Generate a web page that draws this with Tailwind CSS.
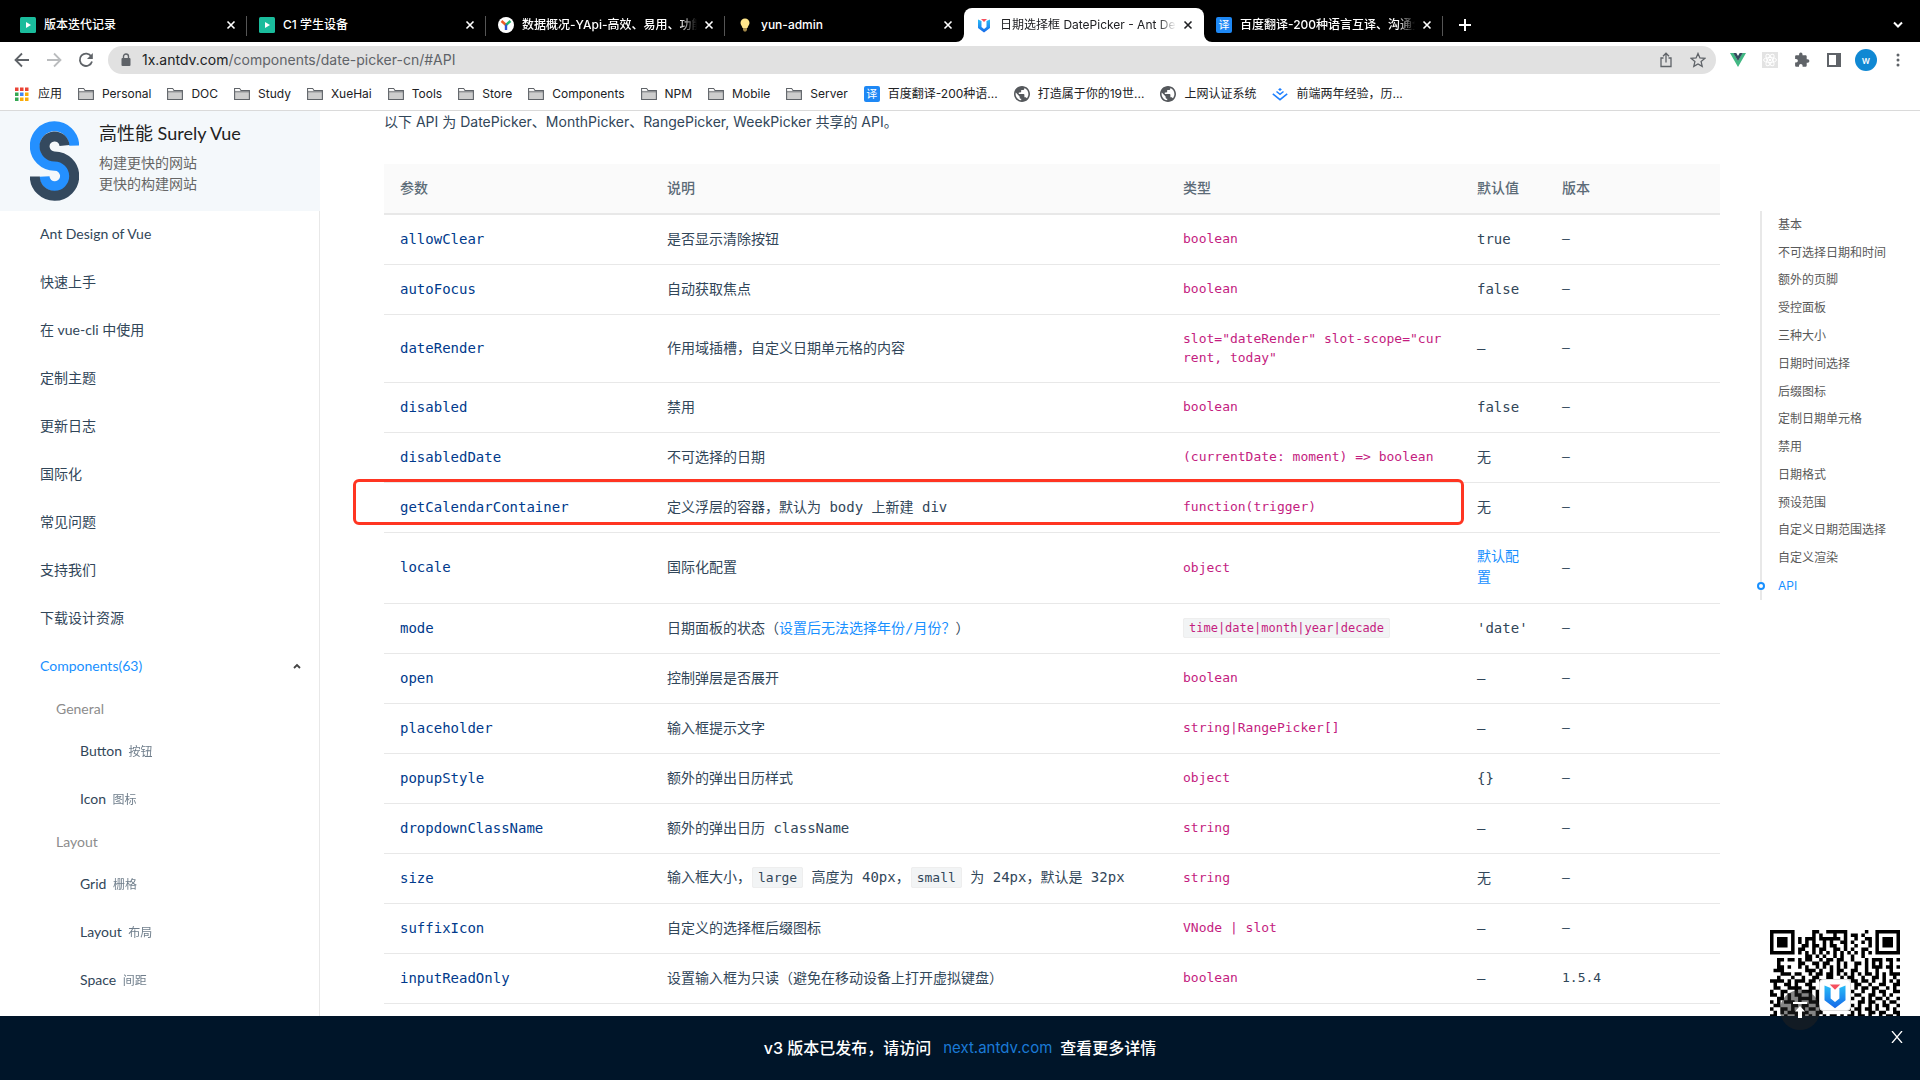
<!DOCTYPE html>
<html lang="zh-CN">

<head>
    <meta charset="UTF-8">
    <meta name="viewport" content="width=device-width, initial-scale=1.0">
    <title>日期选择框 DatePicker - Ant Design of Vue</title>
    <script src="https://cdn.jsdelivr.net/npm/@tailwindcss/browser@4"></script>
</head>

<body class="h-screen overflow-hidden flex flex-col bg-white text-sm text-[#314659] font-[Inter,'Noto_Sans_CJK_SC',sans-serif]">

    <!-- Shared icons -->
    <svg class="absolute size-0" aria-hidden="true">
        <linearGradient id="ug" x1="0" y1="0" x2="0" y2="1"><stop offset="0" stop-color="#29bdf8" /><stop offset="1" stop-color="#1668e8" /></linearGradient>
        <symbol id="i-close" viewBox="0 0 16 16"><path d="M4.500 4.500l7 7M11.500 4.500l-7 7" stroke="currentColor" stroke-width="1.600" fill="none" /></symbol>
        <symbol id="i-play" viewBox="0 0 16 16"><rect width="16" height="16" rx="1.500" fill="#1abc9c" /><path d="M6 5l5 3-5 3z" fill="#fff" /></symbol>
        <symbol id="i-folder" viewBox="0 0 16 16"><path d="M.6 13.500v-11h5l1.400 2h8.400v9z" fill="#cdcdcd" stroke="#5f6368" stroke-width="1.100" /><path d="M1 5.800h14" stroke="#5f6368" stroke-width=".8" /><path d="M1.200 3.100h4.100l1.100 1.600H1.200z" fill="#fff" /></symbol>
        <symbol id="i-globe" viewBox="2 2 20 20"><path d="M12 2C6.480 2 2 6.480 2 12s4.480 10 10 10 10-4.480 10-10S17.520 2 12 2zm-1 17.930c-3.950-.49-7-3.850-7-7.930 0-.62.08-1.210.21-1.790L9 15v1c0 1.100.9 2 2 2v1.930zm6.900-2.540c-.26-.81-1-1.390-1.900-1.390h-1v-3c0-.55-.45-1-1-1H8v-2h2c.55 0 1-.45 1-1V7h2c1.100 0 2-.9 2-2v-.41c2.930 1.190 5 4.060 5 7.410 0 2.080-.8 3.970-2.100 5.390z" fill="#55585c" /></symbol>
        <symbol id="i-antv" viewBox="0 0 32 32"><path d="M4 5l7 3v12l5 4 5-4V8l7-3v17L16 31 4 22z" fill="url(#ug)" /><path d="M10 4h12l-6 6z" fill="#f5515f" /></symbol>
    </svg>

    <!-- Tab strip -->
    <header class="shrink-0">
        <div class="h-[42px] bg-black text-white text-xs flex items-end pl-2">
            <div class="w-[239px] h-[34px] px-3 pr-2 flex items-center gap-2 relative">
                <svg class="size-4 shrink-0"><use href="#i-play" /></svg>
                <span class="flex-1 whitespace-nowrap overflow-hidden font-medium">版本迭代记录</span>
                <button class="-ml-1" aria-label="关闭"><svg class="size-4"><use href="#i-close" /></svg></button>
                <span class="absolute right-0 top-2 w-px h-5 bg-[#555]"></span>
            </div>
            <div class="w-[239px] h-[34px] px-3 pr-2 flex items-center gap-2 relative">
                <svg class="size-4 shrink-0"><use href="#i-play" /></svg>
                <span class="flex-1 whitespace-nowrap overflow-hidden font-medium">C1 学生设备</span>
                <button class="-ml-1" aria-label="关闭"><svg class="size-4"><use href="#i-close" /></svg></button>
                <span class="absolute right-0 top-2 w-px h-5 bg-[#555]"></span>
            </div>
            <div class="w-[239px] h-[34px] px-3 pr-2 flex items-center gap-2 relative">
                <svg class="size-4 shrink-0" viewBox="0 0 16 16"><circle cx="8" cy="8" r="8" fill="#fff" /><g fill="none" stroke-width="2.400"><path d="M3.500 4L8 8" stroke="#f15a24" /><path d="M12.500 4L8 8" stroke="#22b573" /><path d="M8 7.500v5.500" stroke="#2f55d4" /></g></svg>
                <span class="flex-1 whitespace-nowrap overflow-hidden font-medium mask-r-from-90%">数据概况-YApi-高效、易用、功能</span>
                <button class="-ml-1" aria-label="关闭"><svg class="size-4"><use href="#i-close" /></svg></button>
                <span class="absolute right-0 top-2 w-px h-5 bg-[#555]"></span>
            </div>
            <div class="w-[239px] h-[34px] px-3 pr-2 flex items-center gap-2">
                <svg class="size-4 shrink-0" viewBox="0 0 16 16"><path d="M8 1.500a4.500 4.500 0 0 1 4.500 4.500c0 2-1.700 3-2 5h-5c-.3-2-2-3-2-5A4.500 4.500 0 0 1 8 1.500z" fill="#ffe58a" /><path d="M6 11h4v2l-1 1.500H7L6 13z" fill="#a58a4a" /></svg>
                <span class="flex-1 whitespace-nowrap overflow-hidden font-medium">yun-admin</span>
                <button class="-ml-1" aria-label="关闭"><svg class="size-4"><use href="#i-close" /></svg></button>
            </div>
            <div class="w-[240px] h-[34px] px-3 pr-2 flex items-center gap-2 relative bg-white text-[#202124] rounded-t-lg">
                <svg class="absolute -left-2 bottom-0 size-2" viewBox="0 0 8 8"><path d="M8 0v8H0a8 8 0 0 0 8-8z" fill="#fff" /></svg>
                <svg class="absolute -right-2 bottom-0 size-2" viewBox="0 0 8 8"><path d="M0 0v8h8a8 8 0 0 1-8-8z" fill="#fff" /></svg>
                <svg class="size-4 shrink-0"><use href="#i-antv" /></svg>
                <span class="flex-1 whitespace-nowrap overflow-hidden mask-r-from-90%">日期选择框 DatePicker - Ant Des</span>
                <button class="-ml-1" aria-label="关闭"><svg class="size-4"><use href="#i-close" /></svg></button>
            </div>
            <div class="w-[239px] h-[34px] px-3 pr-2 flex items-center gap-2 relative">
                <span class="size-4 shrink-0 rounded-xs bg-[#1e88f5] text-[11px] leading-4 text-center">译</span>
                <span class="flex-1 whitespace-nowrap overflow-hidden font-medium mask-r-from-90%">百度翻译-200种语言互译、沟通全</span>
                <button class="-ml-1" aria-label="关闭"><svg class="size-4"><use href="#i-close" /></svg></button>
                <span class="absolute right-0 top-2 w-px h-5 bg-[#555]"></span>
            </div>
            <button class="h-[34px] px-3 ml-1 flex items-center" aria-label="新标签页"><svg class="size-3" viewBox="0 0 12 12"><path d="M6 0v12M0 6h12" stroke="#fff" stroke-width="2" /></svg></button>
            <button class="h-[34px] ml-auto mr-4 flex items-center" aria-label="搜索标签页"><svg class="w-3 h-2" viewBox="0 0 12 8"><path d="M2 1.500l4 4 4-4" fill="none" stroke="#fff" stroke-width="2" /></svg></button>
        </div>

        <!-- Toolbar -->
        <div class="h-9 flex items-center pl-3.5 pr-3.5 text-[#5f6368]">
            <div class="flex items-center gap-4">
                <button aria-label="后退"><svg class="size-4" viewBox="0 0 16 16"><path d="M15 8H2M8 1.500L1.500 8 8 14.500" fill="none" stroke="currentColor" stroke-width="1.800" /></svg></button>
                <button aria-label="前进"><svg class="size-4 text-[#babcbe]" viewBox="0 0 16 16"><path d="M1 8h13M8 1.500L14.500 8 8 14.500" fill="none" stroke="currentColor" stroke-width="1.800" /></svg></button>
                <button aria-label="刷新"><svg class="size-4" viewBox="0 0 16 16"><path d="M13.300 4.500A6.200 6.200 0 1 0 14 9.500" fill="none" stroke="currentColor" stroke-width="1.800" /><path d="M14.800 1v6H9z" fill="currentColor" /></svg></button>
            </div>
            <div class="flex-1 h-7 ml-3.5 rounded-full bg-[#e1e1e1] flex items-center pl-3 pr-2.5">
                <svg class="w-3 h-3.5" viewBox="0 0 12 14"><rect x="1.500" y="5" width="9" height="8" rx="1" fill="currentColor" /><path d="M3.500 6V3.500a2.500 2.500 0 0 1 5 0V6" fill="none" stroke="currentColor" stroke-width="1.400" /></svg>
                <a href="#API" class="flex-1 ml-2.5 text-sm"><span class="text-[#202124]">1x.antdv.com</span>/components/date-picker-cn/#API</a>
                <button class="mr-4" aria-label="分享"><svg class="size-4" viewBox="0 0 16 16"><path d="M5.500 6H3v8.500h10V6h-2.500M8 10.500V1.500M5 4.200l3-3 3 3" fill="none" stroke="currentColor" stroke-width="1.300" /></svg></button>
                <button aria-label="收藏"><svg class="size-4" viewBox="0 0 16 16"><path d="M8 1.500l1.900 4.500 4.900.4-3.700 3.200 1.100 4.800L8 11.900l-4.200 2.500 1.100-4.800L1.200 6.400 6.100 6z" fill="none" stroke="currentColor" stroke-width="1.300" /></svg></button>
            </div>
            <div class="flex items-center gap-4 ml-3.5">
                <svg class="size-4" viewBox="0 0 16 16"><path d="M0 1h3.500L8 8.800 12.500 1H16L8 15z" fill="#41b883" /><path d="M3.300 1h3L8 4l1.700-3h3L8 9z" fill="#35495e" /></svg>
                <svg class="size-4" viewBox="0 0 16 16"><rect width="16" height="16" fill="#e3e3e3" /><g fill="none" stroke="#fff"><ellipse cx="8" cy="8" rx="6.500" ry="2.500" /><ellipse cx="8" cy="8" rx="6.500" ry="2.500" transform="rotate(60 8 8)" /><ellipse cx="8" cy="8" rx="6.500" ry="2.500" transform="rotate(120 8 8)" /></g><circle cx="8" cy="8" r="1.300" fill="#fff" /></svg>
                <svg class="size-4" viewBox="0 0 16 16"><path d="M13.700 7.300h-1V4.500c0-.8-.6-1.300-1.300-1.300H8.500v-1a1.700 1.700 0 0 0-3.400 0v1H2.400c-.7 0-1.300.5-1.300 1.300V7h1a1.800 1.800 0 0 1 0 3.600h-1v2.900c0 .7.600 1.300 1.300 1.300H5v-1a1.800 1.800 0 0 1 3.600 0v1h2.800c.7 0 1.300-.6 1.300-1.300v-2.800h1a1.700 1.700 0 0 0 0-3.400z" fill="currentColor" /></svg>
                <svg class="size-4" viewBox="0 0 16 16"><path d="M1 1h14v14H1zM3 3v10h7V3z" fill="currentColor" fill-rule="evenodd" /></svg>
                <span class="size-[22px] -mx-[3px] rounded-full bg-[#1088d3] text-white text-[10px] leading-[22px] text-center font-medium">w</span>
                <button aria-label="菜单"><svg class="size-4" viewBox="0 0 16 16"><g fill="currentColor"><circle cx="8" cy="3" r="1.500" /><circle cx="8" cy="8" r="1.500" /><circle cx="8" cy="13" r="1.500" /></g></svg></button>
            </div>
        </div>

        <!-- Bookmarks -->
        <nav class="h-[33px] flex items-center gap-4 pl-3.5 text-xs text-[#202124] border-b border-[#dadada] [&>a]:flex [&>a]:items-center [&>a]:gap-2 [&>a]:whitespace-nowrap [&_svg]:size-4">
            <a href="#"><svg viewBox="0 0 16 16"><path d="M1 1.500h3.500V5H1zM6 1.500h3.500V5H6zM11 1.500h3.500V5H11z" fill="#ea4335" /><path d="M1 6.500h3.500V10H1zM1 11.500h3.500V15H1z" fill="#34a853" /><path d="M6 6.500h3.500V10H6z" fill="#4285f4" /><path d="M11 6.500h3.500V10H11zM6 11.500h3.500V15H6zM11 11.500h3.500V15H11z" fill="#fbab08" /></svg>应用</a>
            <a href="#"><svg><use href="#i-folder" /></svg>Personal</a>
            <a href="#"><svg><use href="#i-folder" /></svg>DOC</a>
            <a href="#"><svg><use href="#i-folder" /></svg>Study</a>
            <a href="#"><svg><use href="#i-folder" /></svg>XueHai</a>
            <a href="#"><svg><use href="#i-folder" /></svg>Tools</a>
            <a href="#"><svg><use href="#i-folder" /></svg>Store</a>
            <a href="#"><svg><use href="#i-folder" /></svg>Components</a>
            <a href="#"><svg><use href="#i-folder" /></svg>NPM</a>
            <a href="#"><svg><use href="#i-folder" /></svg>Mobile</a>
            <a href="#"><svg><use href="#i-folder" /></svg>Server</a>
            <a href="#"><span class="size-4 rounded-xs bg-[#1e88f5] text-white text-[11px] leading-4 text-center">译</span>百度翻译-200种语...</a>
            <a href="#"><svg><use href="#i-globe" /></svg>打造属于你的19世...</a>
            <a href="#"><svg><use href="#i-globe" /></svg>上网认证系统</a>
            <a href="#"><svg viewBox="0 0 16 16"><g fill="none" stroke="#1e80ff" stroke-width="1.500"><path d="M4.500 5.500L8 8.300l3.500-2.800M.8 7.800L8 13.700l7.200-5.900" /></g><path d="M8 2l1.900 1.500L8 5 6.100 3.500z" fill="#1e80ff" /></svg>前端两年经验，历...</a>
        </nav>
    </header>

    <div class="flex-1 min-h-0 flex overflow-hidden">

        <!-- Sidebar -->
        <aside class="w-80 shrink-0 font-[Lato,'Noto_Sans_CJK_SC',sans-serif]">
            <a href="#" class="h-[100px] bg-[#f4f8fb] flex items-start pl-[30px] pt-2.5">
                <svg class="w-[49px] h-20" viewBox="0 0 49 80" fill="none" stroke-width="10">
                    <path d="M44.200 24.500A19.700 19.700 0 1 0 24.500 44.700A10.300 10.300 0 1 1 14.500 55.500" stroke="#2490ff" />
                    <path d="M34.500 24.500A10 10 0 1 0 24.500 35.400A19.700 19.700 0 1 1 4.800 55.500" stroke="#34495e" />
                </svg>
                <div class="ml-5">
                    <h3 class="text-lg leading-6 text-[#222]">高性能 Surely Vue</h3>
                    <p class="mt-[7px] leading-[21px] text-[#666]">构建更快的网站<br>更快的构建网站</p>
                </div>
            </a>
            <nav class="border-r border-[#e8e8e8] h-full pt-[3px] [&_a]:block [&_a]:h-10 [&_a]:leading-10 [&_a]:mb-2">
                <div class="pl-10">
                    <a href="#">Ant Design of Vue</a>
                    <a href="#">快速上手</a>
                    <a href="#">在 vue-cli 中使用</a>
                    <a href="#">定制主题</a>
                    <a href="#">更新日志</a>
                    <a href="#">国际化</a>
                    <a href="#">常见问题</a>
                    <a href="#">支持我们</a>
                    <a href="#">下载设计资源</a>
                </div>
                <button class="w-full h-10 pl-10 pr-[18px] flex items-center justify-between text-[#1890ff]">Components(63)
                    <svg class="size-2" viewBox="0 0 8 8"><path d="M1 6l3-3 3 3" fill="none" stroke="#444" stroke-width="1.800" /></svg>
                </button>
                <h4 class="pl-14 h-[45px] leading-[45px] text-[#8c8c8c]">General</h4>
                <div class="pl-20 -mb-2">
                    <a href="#">Button <span class="ml-[3px] text-xs opacity-70">按钮</span></a>
                    <a href="#">Icon <span class="ml-[3px] text-xs opacity-70">图标</span></a>
                </div>
                <h4 class="pl-14 h-[45px] leading-[45px] text-[#8c8c8c]">Layout</h4>
                <div class="pl-20">
                    <a href="#">Grid <span class="ml-[3px] text-xs opacity-70">栅格</span></a>
                    <a href="#">Layout <span class="ml-[3px] text-xs opacity-70">布局</span></a>
                    <a href="#">Space <span class="ml-[3px] text-xs opacity-70">间距</span></a>
                </div>
            </nav>
        </aside>

        <!-- API table -->
        <main class="flex-1 min-w-0 pl-16 pr-10">
            <p class="leading-[22px] mb-[31px]">以下 API 为 DatePicker、MonthPicker、RangePicker, WeekPicker 共享的 API。</p>
            <table class="w-full table-fixed border-separate border-spacing-0 text-left font-['DejaVu_Sans_Mono','Noto_Sans_CJK_SC',monospace] [&_td]:px-4 [&_th]:px-4 [&_th]:pb-0.5 [&_td]:pt-0 [&_td]:pb-0.5 [&_td:nth-child(3)]:pb-0 [&_td:nth-child(5)]:pb-0 [&_td]:border-b [&_td]:border-[#e8e8e8] [&_tbody>tr]:h-[50px] [&_td:first-child]:text-[#003a8c] [&_td:nth-child(3)]:text-[13px] [&_td:nth-child(3)]:text-[#c41d7f] [&_td:nth-child(3)]:break-all [&_td:nth-child(5)]:text-[13px] [&_code]:font-[inherit] [&_code]:bg-[#f2f4f5] [&_code]:border [&_code]:border-[#eee] [&_code]:rounded-xs [&_code]:px-[5px] [&_code]:py-0.5">
                <colgroup>
                    <col class="w-[267px]">
                    <col class="w-[516px]">
                    <col class="w-[294px]">
                    <col class="w-[85px]">
                    <col>
                </colgroup>
                <thead>
                    <tr class="h-[51px] bg-[#fafafa] text-[#5c6b77] font-[Inter,'Noto_Sans_CJK_SC',sans-serif] [&>th]:font-medium [&>th]:border-b-2 [&>th]:border-[#e8e8e8]">
                        <th>参数</th>
                        <th>说明</th>
                        <th>类型</th>
                        <th>默认值</th>
                        <th>版本</th>
                    </tr>
                </thead>
                <tbody>
                    <tr><td>allowClear</td><td>是否显示清除按钮</td><td>boolean</td><td>true</td><td>–</td></tr>
                    <tr><td>autoFocus</td><td>自动获取焦点</td><td>boolean</td><td>false</td><td>–</td></tr>
                    <tr class="h-[68px]!"><td>dateRender</td><td>作用域插槽，自定义日期单元格的内容</td><td>slot="dateRender" slot-scope="current, today"</td><td>–</td><td>–</td></tr>
                    <tr><td>disabled</td><td>禁用</td><td>boolean</td><td>false</td><td>–</td></tr>
                    <tr><td>disabledDate</td><td>不可选择的日期</td><td>(currentDate: moment) =&gt; boolean</td><td>无</td><td>–</td></tr>
                    <tr class="relative">
                        <td>getCalendarContainer<span class="absolute -top-1 -left-[31px] right-64 h-[46px] border-3 border-[#ff3522] rounded-md"></span></td>
                        <td>定义浮层的容器，默认为 body 上新建 div</td><td>function(trigger)</td><td>无</td><td>–</td>
                    </tr>
                    <tr class="h-[71px]!"><td>locale</td><td>国际化配置</td><td>object</td><td><a href="#" class="block leading-[21px] text-[#1890ff]">默认配置</a></td><td>–</td></tr>
                    <tr><td>mode</td><td>日期面板的状态（<a href="#" class="text-[#1890ff]">设置后无法选择年份/月份？</a>）</td><td><code class="text-xs">time|date|month|year|decade</code></td><td>'date'</td><td>–</td></tr>
                    <tr><td>open</td><td>控制弹层是否展开</td><td>boolean</td><td>–</td><td>–</td></tr>
                    <tr><td>placeholder</td><td>输入框提示文字</td><td>string|RangePicker[]</td><td>–</td><td>–</td></tr>
                    <tr><td>popupStyle</td><td>额外的弹出日历样式</td><td>object</td><td>{}</td><td>–</td></tr>
                    <tr><td>dropdownClassName</td><td>额外的弹出日历 className</td><td>string</td><td>–</td><td>–</td></tr>
                    <tr><td>size</td><td>输入框大小，<code class="text-[13px] ml-px">large</code> 高度为 40px，<code class="text-[13px] ml-px">small</code> 为 24px，默认是 32px</td><td>string</td><td>无</td><td>–</td></tr>
                    <tr><td>suffixIcon</td><td>自定义的选择框后缀图标</td><td>VNode | slot</td><td>–</td><td>–</td></tr>
                    <tr><td>inputReadOnly</td><td>设置输入框为只读（避免在移动设备上打开虚拟键盘）</td><td>boolean</td><td>–</td><td>1.5.4</td></tr>
                </tbody>
            </table>
        </main>

        <!-- Anchor list -->
        <aside class="w-40 shrink-0 pt-[100px]">
            <nav class="h-[389px] flex flex-col border-l-2 border-[#e8e8e8] pl-4 text-xs text-[#595959] [&>a]:flex-1 [&>a]:flex [&>a]:items-center">
                <a href="#">基本</a>
                <a href="#">不可选择日期和时间</a>
                <a href="#">额外的页脚</a>
                <a href="#">受控面板</a>
                <a href="#">三种大小</a>
                <a href="#">日期时间选择</a>
                <a href="#">后缀图标</a>
                <a href="#">定制日期单元格</a>
                <a href="#">禁用</a>
                <a href="#">日期格式</a>
                <a href="#">预设范围</a>
                <a href="#">自定义日期范围选择</a>
                <a href="#">自定义渲染</a>
                <a href="#API" class="relative text-[#1890ff]"><span class="absolute -left-[21px] size-2 rounded-full border-2 border-[#1890ff] bg-white"></span>API</a>
            </nav>
        </aside>
    </div>

    <!-- QR code -->
    <div class="fixed right-5 bottom-5 size-[130px] bg-white">
        <svg id="qr" class="size-[130px]" viewBox="0 0 37 37"></svg>
        <div class="absolute left-[49px] top-[49px] size-8 rounded-sm bg-white border border-[#ddd] flex items-center justify-center"><svg class="size-7"><use href="#i-antv" /></svg></div>
    </div>

    <!-- Version notice -->
    <footer class="fixed inset-x-0 bottom-0 h-16 bg-[#001529] text-white text-base font-medium flex items-center justify-center">
        <span>v3 版本已发布，请访问</span>
        <a href="#" class="ml-3 mr-2 text-[15px] font-normal text-[#1b7ad6]">next.antdv.com</a>
        <span>查看更多详情</span>
        <button class="absolute right-[17px] top-[15px]" aria-label="关闭"><svg class="size-3" viewBox="0 0 12 12"><path d="M1 0l10 12M11 0L1 12" stroke="#fff" stroke-width="1.300" /></svg></button>
    </footer>

    <!-- Back to top -->
    <button class="fixed right-[100px] bottom-[50px] size-10 rounded-full bg-[#202020]/55 flex items-center justify-center" aria-label="回到顶部">
        <svg class="w-3.5 h-4" viewBox="0 0 14 16"><path d="M0 0h14v2H0zM7 4l5 5.500H9V16H5V9.500H2z" fill="#fff" /></svg>
    </button>

    <script>
        const rows = [
            '#######.....##..######.....#..#######',
            '#.....#.....#.#...#..#.##.#...#.....#',
            '#.###.#.#.###.######.#..#..##.#.###.#',
            '#.###.#.#.#.#..#.#..##.#..#.#.#.###.#',
            '#.###.#..##.##.#.##..#..#...#.#.###.#',
            '#.....#.##..#.##..##.#.#..##..#.....#',
            '#######.#.#.#.#.#.#.#.#.#.#.#.#######',
            '..........##.#.#..#.#..#..#..........',
            '..##.##.#.##..#.##.##..#...#.###.##.#',
            '..#.....##..##.##..#.#..##.#.#.#..#..',
            '..##.#..#.#..#.#.#.#.#..#..#.###.##.#',
            '.###......###.#..#.##..##..#..#...#..',
            '...###.##..#.##.##.#.#.#.#.##.#.#.###',
            '..#...#..#..##..##..#.##..#..##.#..#.',
            '####.#.###.##.#.#.#.#..##.##.#..#.#.#',
            '.#..##.#..##...#.#..#.#.##..#..##..##',
            '.##..####..##.#..#....#.#.##.##..#.#.',
            '#..##..#.###.#........##..#..#.##..##',
            '##.#.#.##..#.##.......#.##..##..#.#..',
            '..##.#..####.#........##..#.#.##.#..#',
            '#.#.###.#..###........#..##.##..#.##.',
            '.##...##.##..#........##.#..#.#.##..#',
            '#..##.#..#.##.#.......#.##.##.#..#.#.',
            '.#.#.###.##..##........#.#..##.##..##',
            '##..#..###.#.#.#.##.#.##.##.#..#.##.#'
        ];
        let d = '';
        rows.forEach((row, y) => {
            [...row].forEach((cell, x) => {
                if (cell === '#') d += `M${x} ${y}h1v1h-1z`;
            });
        });
        document.getElementById('qr').innerHTML = `<path d="${d}"/>`;
    </script>
</body>

</html>
